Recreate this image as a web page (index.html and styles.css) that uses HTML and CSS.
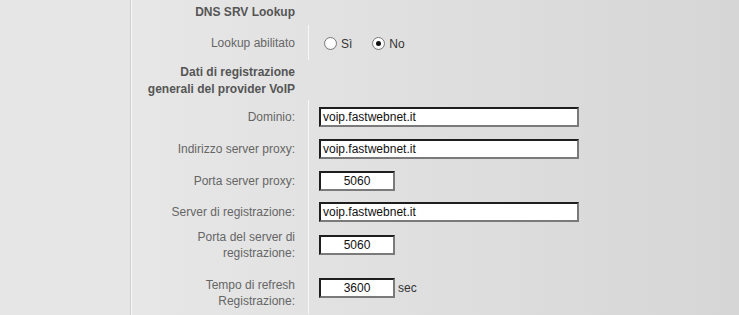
FILE: index.html
```html
<!DOCTYPE html>
<html lang="it">
<head>
<meta charset="utf-8">
<title>Configurazione VoIP</title>
<link rel="stylesheet" href="styles.css">
</head>
<body>
<div class="page">
  <div class="sidebar"></div>
  <div class="main">
    <div class="row row-dns">
      <div class="label label-head">DNS SRV Lookup</div>
      <div class="value value-plain"></div>
    </div>
    <div class="row row-lookup">
      <div class="label">Lookup abilitato</div>
      <div class="value">
        <div class="radios">
          <span class="radio"></span><span class="radio-text">Sì</span>
          <span class="radio radio-on"></span><span class="radio-text">No</span>
        </div>
      </div>
    </div>
    <div class="row row-dati">
      <div class="label label-head">Dati di registrazione<br>generali del provider VoIP</div>
      <div class="value value-plain"></div>
    </div>
    <div class="row row-dominio">
      <div class="label">Dominio:</div>
      <div class="value"><div class="field field-long">voip.fastwebnet.it</div></div>
    </div>
    <div class="row row-proxy">
      <div class="label">Indirizzo server proxy:</div>
      <div class="value"><div class="field field-long">voip.fastwebnet.it</div></div>
    </div>
    <div class="row row-porta">
      <div class="label">Porta server proxy:</div>
      <div class="value"><div class="field field-short">5060</div></div>
    </div>
    <div class="row row-server">
      <div class="label">Server di registrazione:</div>
      <div class="value"><div class="field field-long">voip.fastwebnet.it</div></div>
    </div>
    <div class="row row-porta-reg">
      <div class="label">Porta del server di<br>registrazione:</div>
      <div class="value"><div class="field field-short">5060</div></div>
    </div>
    <div class="row row-tempo">
      <div class="label label-low">Tempo di refresh<br>Registrazione:</div>
      <div class="value"><div class="field field-short">3600</div><span class="unit">sec</span></div>
    </div>
  </div>
</div>
</body>
</html>
```
FILE: styles.css
```css
html, body {
  margin: 0;
  padding: 0;
}
body {
  background: #e6e6e6;
  font-family: "Liberation Sans", Arial, sans-serif;
  font-size: 12px;
  width: 739px;
  height: 315px;
  overflow: hidden;
}
.page {
  display: flex;
  height: 315px;
}
.sidebar {
  width: 130px;
  flex: none;
  background: #e6e6e6;
  border-right: 1px solid #cfcfcf;
}
.main {
  flex: 1;
  border-left: 1px solid #f8f8f8;
  background: linear-gradient(to right, #e7e7e7 0%, #e2e2e2 30%, #d6d6d6 100%);
}
.row {
  display: grid;
  grid-template-columns: 176px 1fr;
}
.row-dns { height: 25px; }
.row-lookup { height: 35px; }
.row-dati { height: 40px; }
.row-dominio { height: 33px; }
.row-proxy { height: 32px; }
.row-porta { height: 31px; }
.row-server { height: 32px; }
.row-porta-reg { height: 34px; }
.row-tempo { height: 52px; }
.label {
  display: flex;
  align-items: center;
  justify-content: flex-end;
  text-align: right;
  padding-right: 13px;
  color: #666;
  line-height: 16px;
}
.label-head {
  font-weight: bold;
  color: #555;
  line-height: 17px;
}
.row-dati .label { padding-top: 1px; }
.label-low {
  padding-top: 10px;
  box-sizing: border-box;
}
.value {
  display: flex;
  align-items: center;
  border-left: 1px solid #f7f7f7;
  padding-left: 10px;
}
.value-plain {
  border-left-color: transparent;
}
.radios {
  display: flex;
  align-items: center;
  padding-left: 5px;
  padding-top: 2px;
}
.radio {
  width: 11px;
  height: 11px;
  border: 1px solid #7a7a7a;
  border-radius: 50%;
  background: radial-gradient(circle at 50% 40%, #ffffff 40%, #e8e8e8 100%);
  display: flex;
  align-items: center;
  justify-content: center;
}
.radio-on::after {
  content: "";
  width: 5px;
  height: 5px;
  border-radius: 50%;
  background: #111;
}
.radio-text {
  color: #333;
  margin-left: 4px;
  margin-right: 20px;
}
.field {
  box-sizing: border-box;
  height: 20px;
  background: #fff;
  border-style: solid;
  border-width: 2px;
  border-color: #1e1e1e #7a7a7a #7a7a7a #1e1e1e;
  color: #111;
  line-height: 16px;
  padding-left: 2px;
  white-space: nowrap;
}
.field-long {
  width: 260px;
}
.field-short {
  width: 76px;
  text-align: center;
  padding-left: 0;
}
.unit {
  color: #333;
  margin-left: 3px;
}
```
